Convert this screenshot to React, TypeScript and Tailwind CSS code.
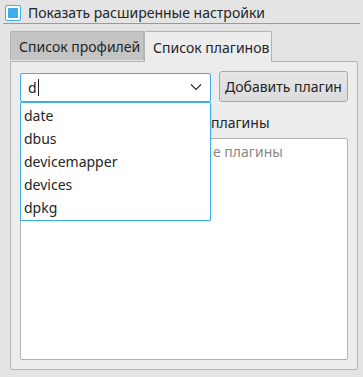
import { useState } from "react";

const plugins = ["date", "dbus", "devicemapper", "devices", "dpkg"];

export default function App() {
  const [query] = useState("d");

  return (
    <div className="w-[363px] h-[377px] overflow-hidden bg-[#e4e4e4] font-['Noto_Sans',sans-serif] text-[14px] text-[#232627]">
      {/* Advanced settings checkbox */}
      <div className="flex items-center h-[23px] pl-[5px] gap-[7px] pt-[2px]">
        <div className="w-[16px] h-[16px] rounded-[2px] border border-[#3daee9] bg-white p-[2px]">
          <div className="w-full h-full rounded-[1px] bg-[#3daee9]" />
        </div>
        <span>Показать расширенные настройки</span>
      </div>
      <div className="mx-[3px] h-px bg-[#9a9a9a]" />

      {/* Tabs */}
      <div className="ml-[10px] mr-[5px] mt-[7px]">
        <div className="flex items-end h-[30px] relative z-10">
          <div className="w-[134px] h-[29px] mb-px flex items-center pl-[8px] bg-[#c4c4c4] border border-b-0 border-[#b4b4b4] rounded-tl-[2px]">
            Список профилей
          </div>
          <div className="w-[128px] h-[31px] -mb-px flex items-center pl-[8px] bg-[#ececec] border border-b-0 border-[#b4b4b4] rounded-t-[2px]">
            Список плагинов
          </div>
        </div>

        {/* Tab panel */}
        <div className="h-[309px] bg-[#ececec] border border-[#b4b4b4] rounded-b-[2px] rounded-tr-[2px] pt-[10px] px-[9px] pb-[9px] flex flex-col">
          <div className="flex items-center gap-[8px]">
            <div className="relative">
              <div className="w-[191px] h-[29px] bg-white border border-[#3daee9] rounded-[2px] flex items-center pl-[7px] pr-[8px]">
                <span>{query}</span>
                <span className="w-px h-[17px] bg-[#232627] ml-px" />
                <svg className="ml-auto" width="12" height="8" viewBox="0 0 12 8">
                  <path d="M1 1.5 L6 6.5 L11 1.5" fill="none" stroke="#232627" strokeWidth="1.1" />
                </svg>
              </div>
              {/* Completion popup */}
              <div className="absolute left-0 top-[29px] z-20 w-[191px] h-[119px] bg-white border border-[#3daee9] rounded-[1px] pt-[1px] shadow-[1px_1px_1px_rgba(0,0,0,0.08)]">
                {plugins.map((p) => (
                  <div key={p} className="h-[23px] leading-[23px] pl-[3px]">
                    {p}
                  </div>
                ))}
              </div>
            </div>
            <button className="w-[129px] h-[31px] -mt-px rounded-[3px] border border-[#a8a8a8] bg-gradient-to-b from-[#e6e6e6] to-[#dcdcdc] text-[14px]">
              Добавить плагин
            </button>
          </div>

          <div className="mt-[9px] h-[23px] leading-[23px] whitespace-nowrap pl-[191px]">
            плагины
          </div>

          <div className="mt-[4px] flex-1 bg-white border border-[#b4b4b4] rounded-[2px] pl-[192px] pt-[2px] text-[#8a8a8a] whitespace-nowrap">
            е плагины
          </div>
        </div>
      </div>
    </div>
  );
}
